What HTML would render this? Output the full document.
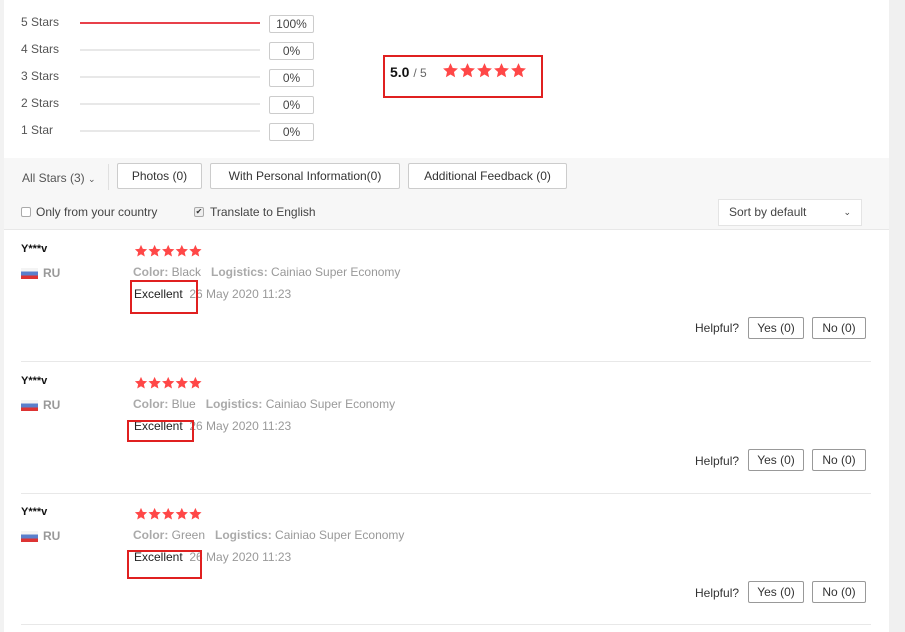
<!DOCTYPE html>
<html><head><meta charset="utf-8"><style>
*{margin:0;padding:0;box-sizing:border-box}
body{width:905px;height:632px;overflow:hidden;background:#fff;font-family:"Liberation Sans",sans-serif;font-size:12px;color:#333;position:relative}
.a{position:absolute;white-space:nowrap}
.lbl{left:21px;color:#555;font-size:12px}
.bar{left:80px;width:180px;height:2px;background:#e8e8e8}
.pct{left:269px;width:45px;height:18px;border:1px solid #ccc;border-radius:2px;text-align:center;line-height:16px;color:#444;font-size:12px}
.btn{height:26px;border:1px solid #ccc;border-radius:2px;background:#fff;text-align:center;line-height:24px;color:#333;font-size:12px}
.rb{border:2px solid #e02020}
.g{color:#999;font-size:12px}
.g b{color:#aaa}
.hb{height:22px;border:1px solid #999;border-radius:2px;text-align:center;line-height:20px;font-size:12px;color:#333}
.div{left:21px;width:850px;height:1px;background:#e8e8e8}
.flag{width:17px;height:11px;background:linear-gradient(#f4f4f4 0 33%,#5a7fcc 33% 66%,#d33 66%)}
</style></head><body>
<svg width="0" height="0" style="position:absolute"><defs><symbol id="s" viewBox="0 0 24 24"><polygon fill="#ff4747" points="12,1.5 15.1,8.4 22.5,9.1 16.9,14.1 18.5,21.5 12,17.6 5.5,21.5 7.1,14.1 1.5,9.1 8.9,8.4"/></symbol></defs></svg>
<div class="a" style="left:0;top:0;width:4px;height:632px;background:#f2f2f2"></div>
<div class="a" style="left:889px;top:0;width:16px;height:632px;background:#f0f0f0"></div>

<div class="a lbl" style="top:15px">5 Stars</div>
<div class="a lbl" style="top:42px">4 Stars</div>
<div class="a lbl" style="top:69px">3 Stars</div>
<div class="a lbl" style="top:96px">2 Stars</div>
<div class="a lbl" style="top:123px">1 Star</div>
<div class="a bar" style="top:22px;background:#e8404a"></div>
<div class="a bar" style="top:49px"></div>
<div class="a bar" style="top:76px"></div>
<div class="a bar" style="top:103px"></div>
<div class="a bar" style="top:130px"></div>
<div class="a pct" style="top:15px">100%</div>
<div class="a pct" style="top:42px">0%</div>
<div class="a pct" style="top:69px">0%</div>
<div class="a pct" style="top:96px">0%</div>
<div class="a pct" style="top:123px">0%</div>

<div class="a rb" style="left:383px;top:55px;width:160px;height:43px"></div>
<div class="a" style="left:390px;top:64px;font-size:14px;font-weight:bold;color:#111">5.0 <span style="font-weight:normal;color:#666;font-size:12px">/ 5</span></div>
<svg class="a" style="left:442px;top:62px" width="90" height="18"><use href="#s" x="0" width="17" height="17"/><use href="#s" x="17" width="17" height="17"/><use href="#s" x="34" width="17" height="17"/><use href="#s" x="51" width="17" height="17"/><use href="#s" x="68" width="17" height="17"/></svg>

<div class="a" style="left:4px;top:158px;width:885px;height:72px;background:#f7f7f7;border-bottom:1px solid #e8e8e8"></div>
<div class="a" style="left:22px;top:171px;color:#555">All Stars (3) <span style="font-size:9px">⌄</span></div>
<div class="a" style="left:108px;top:164px;width:1px;height:26px;background:#e0e0e0"></div>
<div class="a btn" style="left:117px;top:163px;width:85px">Photos (0)</div>
<div class="a btn" style="left:210px;top:163px;width:190px">With Personal Information(0)</div>
<div class="a btn" style="left:408px;top:163px;width:159px">Additional Feedback (0)</div>
<div class="a" style="left:21px;top:207px;width:10px;height:10px;border:1px solid #aaa;background:#fff;border-radius:2px"></div>
<div class="a" style="left:36px;top:205px;color:#444">Only from your country</div>
<div class="a" style="left:194px;top:207px;width:10px;height:10px;border:1px solid #aaa;background:#eee;border-radius:2px;font-size:8px;line-height:8px;text-align:center">✔</div>
<div class="a" style="left:210px;top:205px;color:#444">Translate to English</div>
<div class="a" style="left:718px;top:199px;width:144px;height:27px;border:1px solid #e4e4e4;background:#fff;padding-left:10px;line-height:25px;color:#444">Sort by default<span style="position:absolute;right:10px;font-size:9px">⌄</span></div>

<!-- review 1 -->
<div class="a" style="left:21px;top:243px;font-weight:bold;font-size:11px;color:#111">Y***v</div>
<div class="a flag" style="left:21px;top:268px"></div>
<div class="a" style="left:43px;top:266px;color:#999;font-weight:bold">RU</div>
<svg class="a" style="left:134px;top:244px" width="72" height="14"><use href="#s" x="0" width="14" height="14"/><use href="#s" x="13.6" width="14" height="14"/><use href="#s" x="27.2" width="14" height="14"/><use href="#s" x="40.8" width="14" height="14"/><use href="#s" x="54.4" width="14" height="14"/></svg>
<div class="a g" style="left:133px;top:265px"><b>Color:</b> Black &nbsp;&nbsp;<b>Logistics:</b> Cainiao Super Economy</div>
<div class="a" style="left:134px;top:287px;color:#222">Excellent <span class="g">&nbsp;26 May 2020 11:23</span></div>
<div class="a rb" style="left:130px;top:280px;width:68px;height:34px"></div>
<div class="a" style="left:695px;top:321px;color:#333">Helpful?</div>
<div class="a hb" style="left:748px;top:317px;width:56px">Yes (0)</div>
<div class="a hb" style="left:812px;top:317px;width:54px">No (0)</div>
<div class="a div" style="top:361px"></div>

<!-- review 2 -->
<div class="a" style="left:21px;top:375px;font-weight:bold;font-size:11px;color:#111">Y***v</div>
<div class="a flag" style="left:21px;top:400px"></div>
<div class="a" style="left:43px;top:398px;color:#999;font-weight:bold">RU</div>
<svg class="a" style="left:134px;top:376px" width="72" height="14"><use href="#s" x="0" width="14" height="14"/><use href="#s" x="13.6" width="14" height="14"/><use href="#s" x="27.2" width="14" height="14"/><use href="#s" x="40.8" width="14" height="14"/><use href="#s" x="54.4" width="14" height="14"/></svg>
<div class="a g" style="left:133px;top:397px"><b>Color:</b> Blue &nbsp;&nbsp;<b>Logistics:</b> Cainiao Super Economy</div>
<div class="a" style="left:134px;top:419px;color:#222">Excellent <span class="g">&nbsp;26 May 2020 11:23</span></div>
<div class="a rb" style="left:127px;top:420px;width:67px;height:22px"></div>
<div class="a" style="left:695px;top:454px;color:#333">Helpful?</div>
<div class="a hb" style="left:748px;top:449px;width:56px">Yes (0)</div>
<div class="a hb" style="left:812px;top:449px;width:54px">No (0)</div>
<div class="a div" style="top:493px"></div>

<!-- review 3 -->
<div class="a" style="left:21px;top:506px;font-weight:bold;font-size:11px;color:#111">Y***v</div>
<div class="a flag" style="left:21px;top:531px"></div>
<div class="a" style="left:43px;top:529px;color:#999;font-weight:bold">RU</div>
<svg class="a" style="left:134px;top:507px" width="72" height="14"><use href="#s" x="0" width="14" height="14"/><use href="#s" x="13.6" width="14" height="14"/><use href="#s" x="27.2" width="14" height="14"/><use href="#s" x="40.8" width="14" height="14"/><use href="#s" x="54.4" width="14" height="14"/></svg>
<div class="a g" style="left:133px;top:528px"><b>Color:</b> Green &nbsp;&nbsp;<b>Logistics:</b> Cainiao Super Economy</div>
<div class="a" style="left:134px;top:550px;color:#222">Excellent <span class="g">&nbsp;26 May 2020 11:23</span></div>
<div class="a rb" style="left:127px;top:550px;width:75px;height:29px"></div>
<div class="a" style="left:695px;top:586px;color:#333">Helpful?</div>
<div class="a hb" style="left:748px;top:581px;width:56px">Yes (0)</div>
<div class="a hb" style="left:812px;top:581px;width:54px">No (0)</div>
<div class="a div" style="top:624px"></div>
</body></html>
